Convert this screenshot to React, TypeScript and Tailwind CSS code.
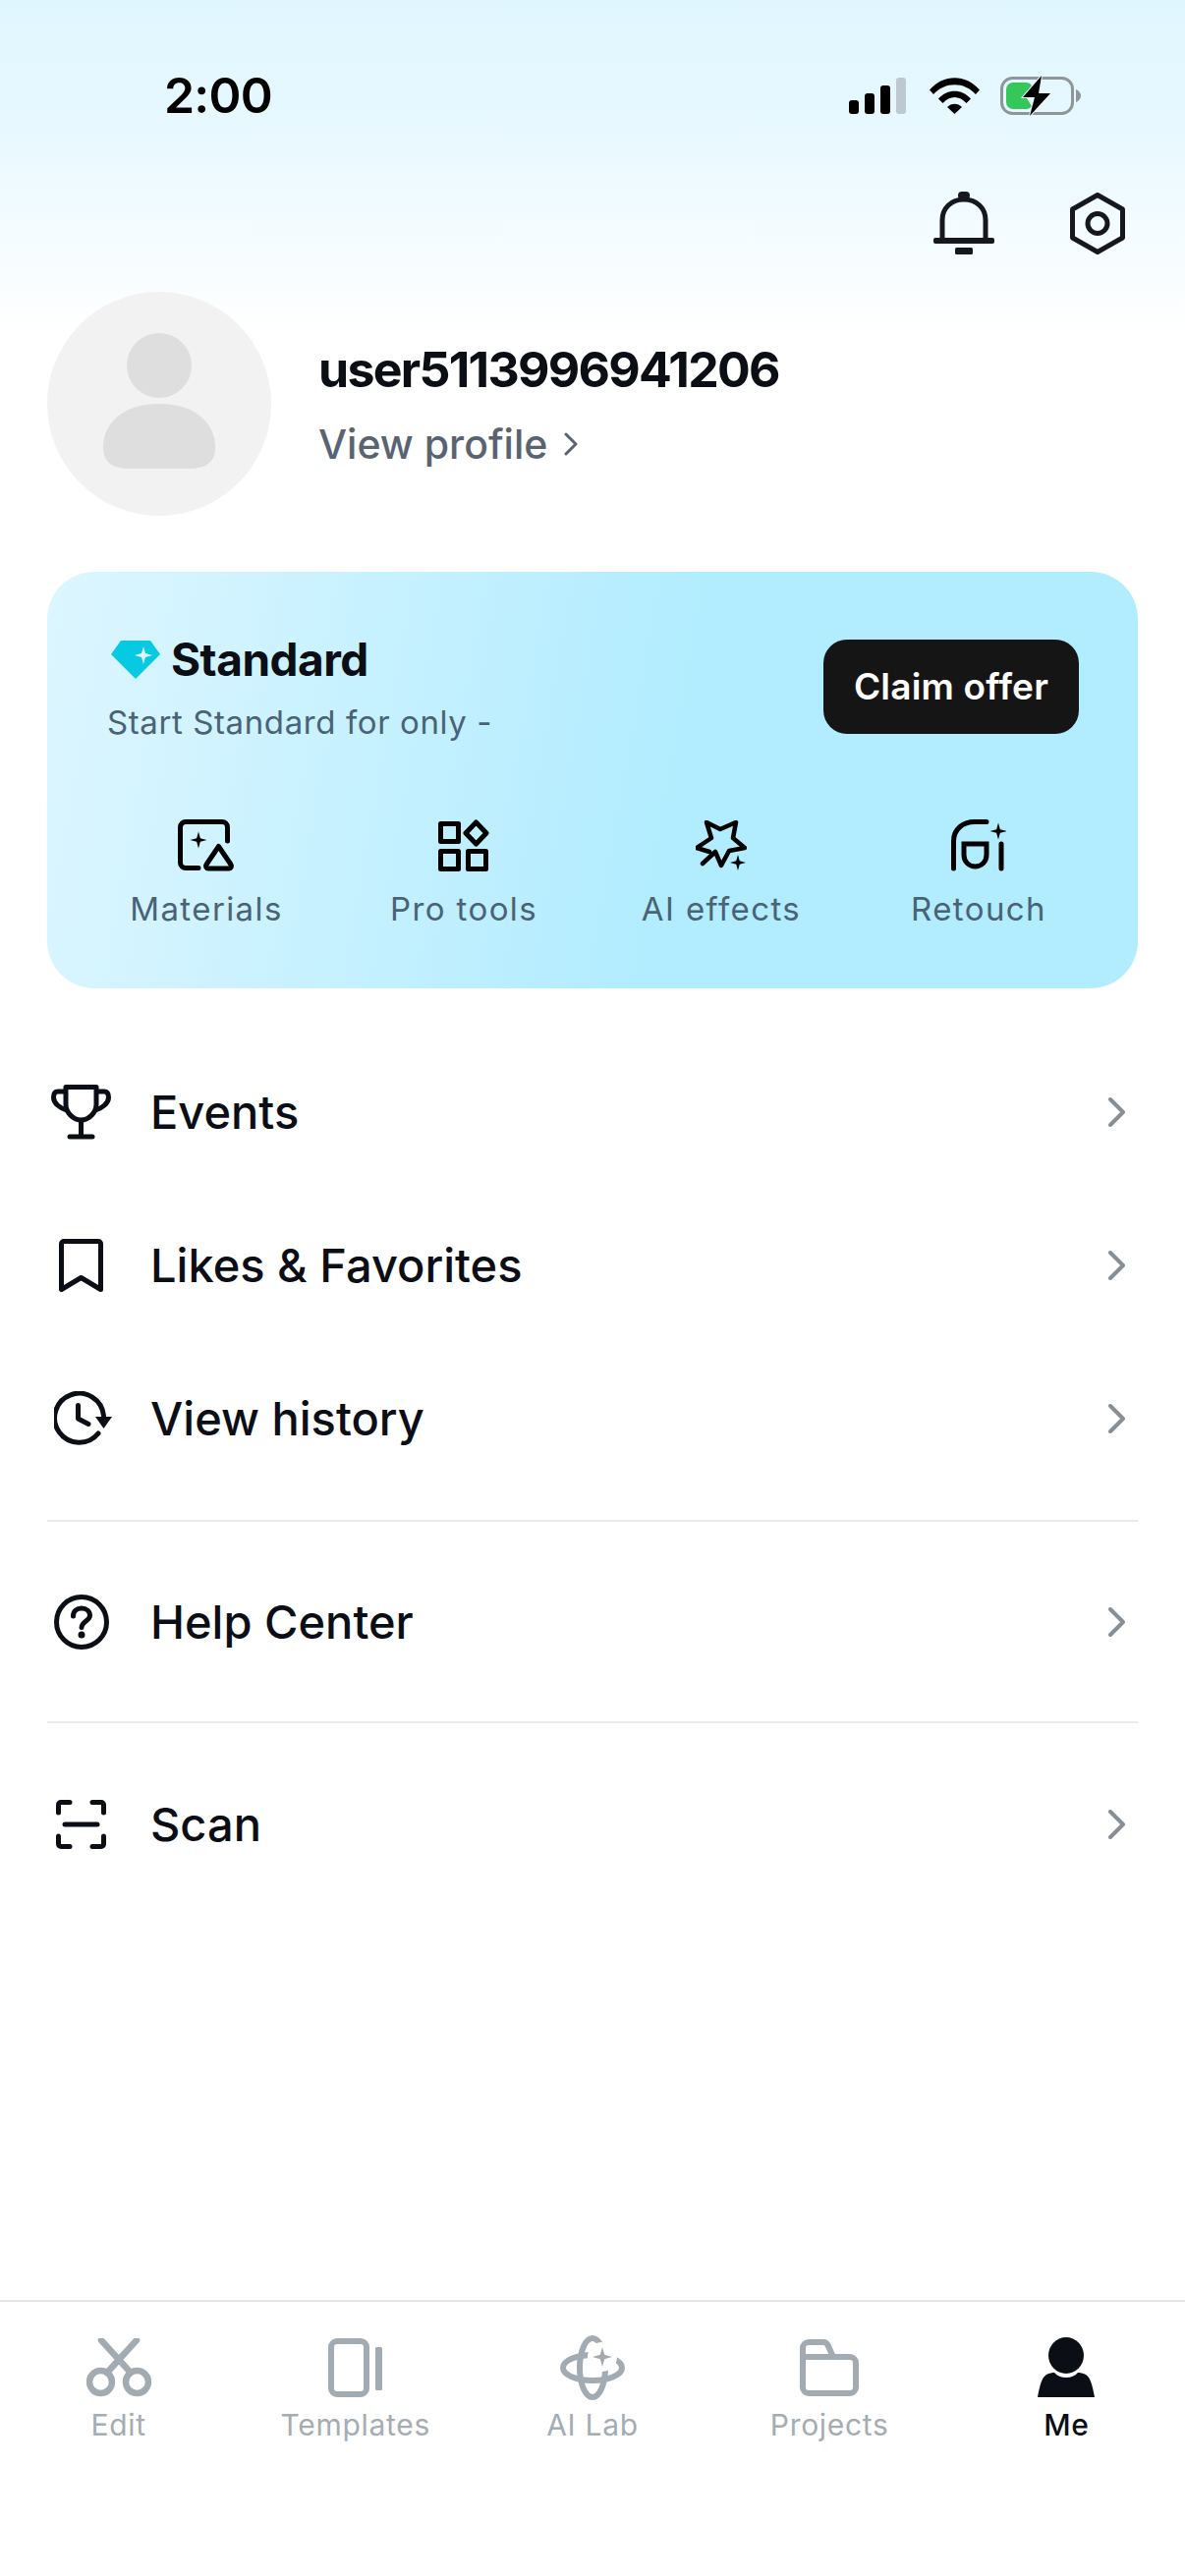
import React from "react";

const ink = "#0b0e14";
const grey = "#a2aab2";

function Sparkle({ x, y, r, fill }: { x: number; y: number; r: number; fill: string }) {
  const k = r * 0.22;
  return (
    <path
      stroke="none"
      d={`M${x} ${y - r}L${x + k} ${y - k}L${x + r} ${y}L${x + k} ${y + k}L${x} ${y + r}L${x - k} ${y + k}L${x - r} ${y}L${x - k} ${y - k}Z`}
      fill={fill}
    />
  );
}

function Signal() {
  return (
    <svg width="58" height="37" viewBox="0 0 58 37">
      <rect x="0" y="23" width="10" height="14" rx="3" fill="#000" />
      <rect x="16" y="16" width="10" height="21" rx="3" fill="#000" />
      <rect x="32" y="8" width="10" height="29" rx="3" fill="#000" />
      <rect x="48" y="0" width="10" height="37" rx="3" fill="#bdc8d0" />
    </svg>
  );
}

function Wifi() {
  return (
    <svg width="51" height="37" viewBox="0 0 51 37">
      <path d="M0 12.5C14 -4 37 -4 51 12.5L47 17C35 4 16 4 4 17Z" fill="#000" />
      <path d="M9 21.5C18 11 33 11 42 21.5L37.5 26C30.5 18 20.5 18 13.5 26Z" fill="#000" />
      <path d="M18 30C22 25.5 29 25.5 33 30L25.5 37Z" fill="#000" />
    </svg>
  );
}

function Battery() {
  return (
    <svg width="84" height="41" viewBox="0 0 84 41">
      <rect x="1.5" y="2.5" width="72" height="36" rx="11" fill="none" stroke="#8f9598" strokeWidth="3" />
      <path d="M77 14C80 15 82 18 82 20.5C82 23 80 26 77 27Z" fill="#8f9598" />
      <path d="M6 14a7 7 0 0 1 7-7H26a7 7 0 0 1 6 3L25 20L32 31a7 7 0 0 1-6 3H13a7 7 0 0 1-7-7Z" fill="#34c759" />
      <path d="M42 0L23 22H35L30 41L51 18H39Z" fill="#000" stroke="#e9f8ff" strokeWidth="2" paintOrder="stroke" />
    </svg>
  );
}

function Bell() {
  return (
    <svg width="62" height="64" viewBox="0 0 62 64" fill="none">
      <path d="M9 50V29C9 17 18 8 31 8C44 8 53 17 53 29V50" stroke="#16181d" strokeWidth="5" />
      <rect x="25" y="0" width="12" height="8" rx="4" fill="#16181d" />
      <rect x="0" y="47" width="62" height="6" rx="2" fill="#16181d" />
      <rect x="22" y="57" width="18" height="7" rx="1.5" fill="#16181d" />
    </svg>
  );
}

function Hex() {
  return (
    <svg width="56" height="63" viewBox="0 0 56 63" fill="none">
      <path d="M28 2.5L53.5 17V46L28 60.5L2.5 46V17Z" stroke="#16181d" strokeWidth="5" strokeLinejoin="round" />
      <circle cx="28" cy="31.5" r="10" stroke="#16181d" strokeWidth="5" />
    </svg>
  );
}

function Diamond() {
  return (
    <svg width="50" height="39" viewBox="0 0 50 39">
      <path d="M10 0H40L50 14L25 39L0 14Z" fill="#06c9e2" />
      <Sparkle x={33} y={15} r={9} fill="#dffaff" />
    </svg>
  );
}

function Materials() {
  return (
    <svg width="58" height="54" viewBox="0 0 58 54" fill="none" stroke="#000" strokeWidth="5" strokeLinecap="round">
      <path d="M21 49.5H8a5.5 5.5 0 0 1-5.5-5.5V8A5.5 5.5 0 0 1 8 2.5H45A5.5 5.5 0 0 1 50.5 8V22" />
      <Sparkle x={21} y={21} r={8.5} fill="#000" />
      <path d="M41.5 27.5L54 46a2.5 2.5 0 0 1-2 4H31a2.5 2.5 0 0 1-2-4Z" strokeLinejoin="round" />
    </svg>
  );
}

function ProTools() {
  return (
    <svg width="52" height="54" viewBox="0 0 52 54" fill="none" stroke="#000" strokeWidth="5" strokeLinejoin="round">
      <rect x="2.5" y="4.5" width="18" height="18" />
      <rect x="2.5" y="32.5" width="18" height="18" />
      <rect x="30.5" y="32.5" width="18" height="18" />
      <path d="M38.5 3L49 14L38.5 25L28 14Z" />
    </svg>
  );
}

function AiEffects() {
  return (
    <svg width="52" height="52" viewBox="0 0 52 52" fill="none" stroke="#000" strokeWidth="4.5" strokeLinejoin="round" strokeLinecap="round">
      <path d="M7 44L20 32L26 46L34 31L50 28L38 18L41 2L25 9L11 2L16 18L1 28L14 32" />
      <Sparkle x={43} y={43} r={8} fill="#000" />
    </svg>
  );
}

function Retouch() {
  return (
    <svg width="56" height="54" viewBox="0 0 56 54" fill="none" stroke="#000" strokeWidth="5" strokeLinecap="round">
      <path d="M2.5 50V22C2.5 10 12 2.5 24 2.5H36" />
      <path d="M13 25H36V36C36 43 31 48 24.5 48C18 48 13 43 13 36Z" />
      <path d="M51 25V50" />
      <Sparkle x={48} y={12} r={8.5} fill="#000" />
    </svg>
  );
}

function Trophy() {
  return (
    <svg width="61" height="56" viewBox="0 0 61 56" fill="none" stroke={ink} strokeWidth="5">
      <path d="M15 2.5H46V20C46 28 39 36 30.5 36C22 36 15 28 15 20Z" strokeLinejoin="round" />
      <path d="M15 7H7C3 7 2.5 10 2.5 13C2.5 19 9 24 16 26" />
      <path d="M46 7H54C58 7 58.5 10 58.5 13C58.5 19 52 24 45 26" />
      <path d="M30.5 36V53" />
      <path d="M19 53H42" strokeLinecap="round" />
    </svg>
  );
}

function Bookmark() {
  return (
    <svg width="45" height="54" viewBox="0 0 45 54" fill="none" stroke={ink} strokeWidth="5" strokeLinejoin="round">
      <path d="M2.5 51.5V5a2.5 2.5 0 0 1 2.5-2.5H40a2.5 2.5 0 0 1 2.5 2.5V51.5L22.5 39.5Z" />
    </svg>
  );
}

function History() {
  return (
    <svg className="ml-[4px]" width="59" height="56" viewBox="0 0 59 56" fill="none" stroke={ink} strokeWidth="5" strokeLinecap="round" strokeLinejoin="round">
      <path d="M45 43A25 25 0 1 1 50.5 25" />
      <path d="M24.5 14.5V28L35 33.5" />
      <path d="M42 26H59L50.5 38Z" fill={ink} stroke="none" />
    </svg>
  );
}

function Help() {
  return (
    <svg width="56" height="56" viewBox="0 0 56 56" fill="none" stroke={ink} strokeWidth="5">
      <circle cx="28" cy="28" r="25.5" />
      <path d="M19.5 22C19.5 17 23 14 28 14C33 14 36.5 17 36.5 21.5C36.5 26.5 28 27.5 28 33.5" strokeLinecap="round" />
      <circle cx="28" cy="41" r="3.5" fill={ink} stroke="none" />
    </svg>
  );
}

function Scan() {
  return (
    <svg width="51" height="50" viewBox="0 0 51 50" fill="none" stroke={ink} strokeWidth="5" strokeLinecap="round" strokeLinejoin="round">
      <path d="M2.5 13V5a2.5 2.5 0 0 1 2.5-2.5H14" />
      <path d="M37 2.5H46a2.5 2.5 0 0 1 2.5 2.5V13" />
      <path d="M2.5 37V45a2.5 2.5 0 0 0 2.5 2.5H14" />
      <path d="M37 47.5H46a2.5 2.5 0 0 0 2.5-2.5V37" />
      <path d="M9 25H42" />
    </svg>
  );
}

function Chevron({ color, w, h, sw }: { color: string; w: number; h: number; sw: number }) {
  return (
    <svg width={w} height={h} viewBox={`0 0 ${w} ${h}`} fill="none" stroke={color} strokeWidth={sw} strokeLinecap="round" strokeLinejoin="round">
      <path d={`M2 2L${w - 2} ${h / 2}L2 ${h - 2}`} />
    </svg>
  );
}

function Scissors() {
  return (
    <svg width="66" height="60" viewBox="0 0 66 60" fill="none" stroke={grey} strokeWidth="6.5">
      <circle cx="14.5" cy="44.5" r="11.5" />
      <circle cx="51.5" cy="44.5" r="11.5" />
      <path d="M21 35L51 2M45 35L15 2" strokeLinecap="round" />
    </svg>
  );
}

function Templates() {
  return (
    <svg width="56" height="60" viewBox="0 0 56 60" fill="none">
      <rect x="3" y="3" width="36" height="54" rx="6" stroke={grey} strokeWidth="6" />
      <rect x="48" y="9" width="7" height="44" rx="1.5" fill={grey} />
    </svg>
  );
}

function AiLab() {
  return (
    <svg width="66" height="66" viewBox="0 0 66 66" fill="none" stroke={grey} strokeWidth="6">
      <ellipse cx="33" cy="33" rx="13" ry="30" />
      <ellipse cx="33" cy="33" rx="30" ry="13" />
      <circle cx="43" cy="22" r="15" fill="#fff" stroke="none" />
      <Sparkle x={43} y={22} r={10} fill={grey} />
    </svg>
  );
}

function Folder() {
  return (
    <svg width="60" height="58" viewBox="0 0 60 58" fill="none" stroke={grey} strokeWidth="6" strokeLinejoin="round">
      <path d="M3 9a6 6 0 0 1 6-6H24a5 5 0 0 1 4.5 3L34 18H51a6 6 0 0 1 6 6V49a6 6 0 0 1-6 6H9a6 6 0 0 1-6-6Z" />
      <path d="M3 18H34" />
    </svg>
  );
}

function Me() {
  return (
    <svg width="58" height="62" viewBox="0 0 58 62" fill={ink}>
      <ellipse cx="29" cy="18.5" rx="18" ry="18.5" />
      <path d="M0 61C2 50 4 41 9 38C12 36.5 15 36 17 36C20 39.5 24 41 29 41C34 41 38 39.5 41 36C43 36 46 36.5 49 38C54 41 56 50 58 61Z" />
    </svg>
  );
}

function Feature({ icon, label }: { icon: React.ReactNode; label: string }) {
  return (
    <div className="flex flex-col items-center">
      <div className="flex h-[54px] items-center justify-center">{icon}</div>
      <div className="mt-[15px] text-[33px] leading-[44px] tracking-[1.4px] text-[#4a6374]">{label}</div>
    </div>
  );
}

function Row({ icon, label }: { icon: React.ReactNode; label: string }) {
  return (
    <div className="flex h-[156px] items-center pr-[13px]">
      <div className="flex w-[69px] justify-center">{icon}</div>
      <div className="ml-[36px] flex-1 text-[47px] font-medium leading-[60px] text-[#0b0e14]">{label}</div>
      <Chevron color="#868e96" w={17} h={30} sw={4} />
    </div>
  );
}

function Tab({ icon, label, active }: { icon: React.ReactNode; label: string; active?: boolean }) {
  return (
    <div className="flex flex-col items-center">
      <div className="flex h-[66px] items-center justify-center">{icon}</div>
      <div className={`mt-[5px] text-[30px] leading-[40px] tracking-[0.7px] ${active ? "font-medium text-[#0b0e14]" : "text-[#a4acb4]"}`}>{label}</div>
    </div>
  );
}

export default function App() {
  return (
    <div className="flex h-[2622px] w-[1206px] flex-col overflow-hidden bg-[linear-gradient(180deg,#e0f6ff_0px,#e6f8ff_110px,#ffffff_340px)] font-['Inter',sans-serif]">
      <div className="flex h-[194px] items-center pl-[167px] pr-[104px]">
        <div className="flex-1 text-[50px] font-semibold leading-[60px] tracking-[-0.8px] text-black">2:00</div>
        <div className="flex items-center">
          <Signal />
          <div className="ml-[24px]"><Wifi /></div>
          <div className="ml-[21px]"><Battery /></div>
        </div>
      </div>

      <div className="flex h-[66px] items-center justify-end gap-[77px] pr-[61px]">
        <Bell />
        <Hex />
      </div>

      <div className="mt-[37px] flex items-center px-[48px]">
        <div className="flex h-[228px] w-[228px] items-center justify-center rounded-full bg-[#f2f2f2]">
          <svg className="mb-[4px]" width="114" height="140" viewBox="0 0 114 140" fill="#dedede">
            <ellipse cx="57" cy="33" rx="33" ry="33" />
            <path d="M0 116C0 92 20 72 57 72C94 72 114 92 114 116C114 132 104 138 88 138H26C10 138 0 132 0 116Z" />
          </svg>
        </div>
        <div className="ml-[48px] flex flex-col">
          <div className="mt-[1px] text-[50px] font-bold leading-[60px] tracking-[-1.7px] text-[#0b0e14]">user5113996941206</div>
          <div className="mt-[20px] flex items-center text-[41px] font-medium leading-[52px] text-[#5a6370]">
            View profile
            <span className="ml-[17px]"><Chevron color="#5a6370" w={14} h={24} sw={3} /></span>
          </div>
        </div>
      </div>

      <div className="mx-[48px] mt-[57px] h-[424px] rounded-[48px] bg-[linear-gradient(100deg,#ddf6ff_0%,#b1ecff_58%,#b1ecff_100%)] px-[31px] pt-[69px]">
        <div className="flex items-start justify-between pl-[30px] pr-[29px]">
          <div className="flex flex-col">
            <div className="mt-[-2px] flex items-center">
              <div className="ml-[4px]"><Diamond /></div>
              <div className="ml-[11px] text-[46px] font-bold leading-[44px] tracking-[-0.5px] text-[#0b0e14]">Standard</div>
            </div>
            <div className="mt-[20px] text-[33px] leading-[44px] tracking-[0.6px] text-[#4a6374]">Start Standard for only -</div>
          </div>
          <div className="flex h-[96px] w-[260px] items-center justify-center rounded-[24px] bg-[#151515] text-[37px] font-semibold tracking-[0.2px] text-white">Claim offer</div>
        </div>
        <div className="mt-[77px] grid grid-cols-4">
          <Feature icon={<Materials />} label="Materials" />
          <Feature icon={<ProTools />} label="Pro tools" />
          <Feature icon={<AiEffects />} label="AI effects" />
          <Feature icon={<Retouch />} label="Retouch" />
        </div>
      </div>

      <div className="mx-[48px] mt-[48px] flex flex-col">
        <Row icon={<Trophy />} label="Events" />
        <Row icon={<Bookmark />} label="Likes & Favorites" />
        <Row icon={<History />} label="View history" />
        <div className="mb-[24px] mt-[25px] h-[2px] bg-[#e9ecee]" />
        <Row icon={<Help />} label="Help Center" />
        <div className="mb-[25px] mt-[23px] h-[2px] bg-[#e9ecee]" />
        <Row icon={<Scan />} label="Scan" />
      </div>

      <div className="mt-auto grid h-[281px] grid-cols-5 border-t-2 border-[#e5e5e5] bg-white pt-[34px]">
        <Tab icon={<Scissors />} label="Edit" />
        <Tab icon={<Templates />} label="Templates" />
        <Tab icon={<AiLab />} label="AI Lab" />
        <Tab icon={<Folder />} label="Projects" />
        <Tab icon={<Me />} label="Me" active />
      </div>
    </div>
  );
}
